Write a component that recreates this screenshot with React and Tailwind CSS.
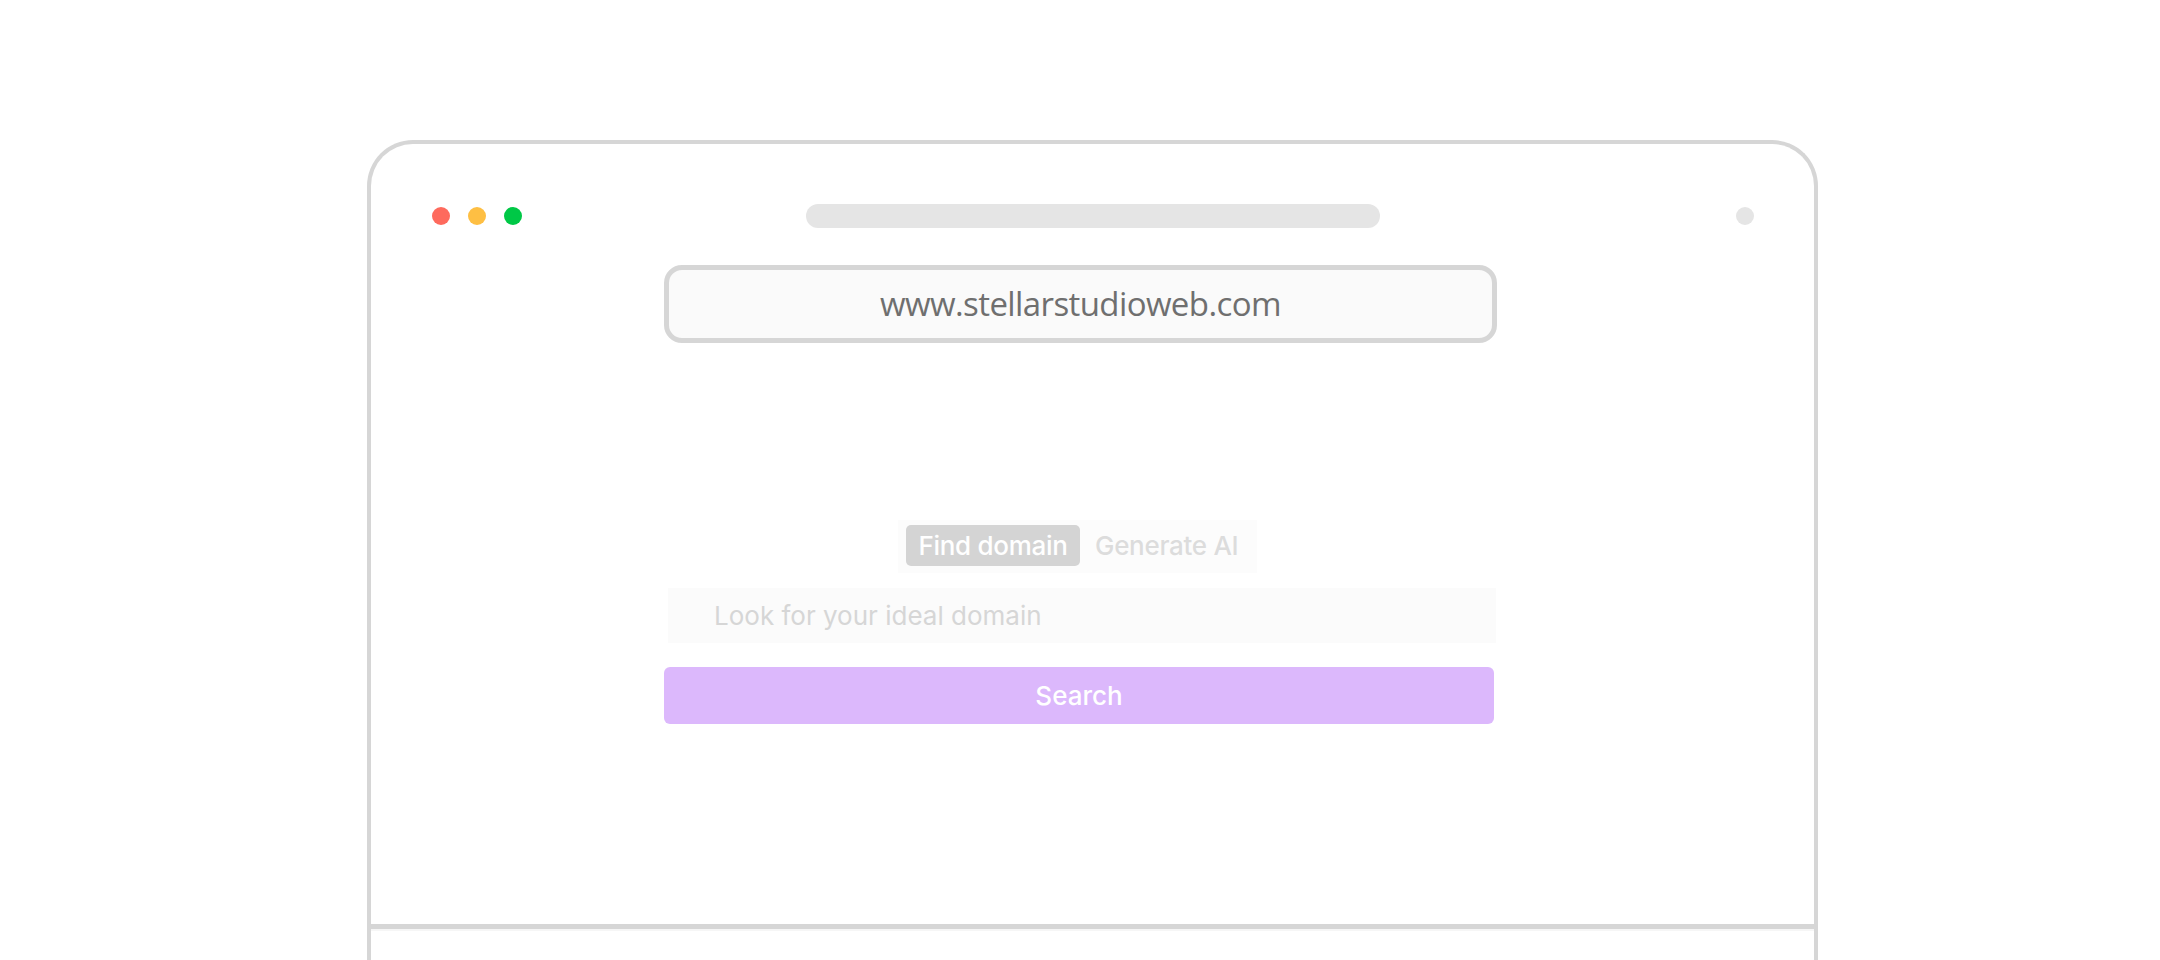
import React from "react";

export default function App() {
  const dots = ["bg-[#fe6a5d]", "bg-[#febf43]", "bg-[#00c846]"];

  return (
    <div className="w-[2160px] h-[960px] overflow-hidden bg-white pt-[140px] pl-[367px]">
      {/* LAPTOP FRAME */}
      <div className="w-[1451px] h-[900px] border-4 border-b-0 border-[#d6d6d6] rounded-t-[46px] flex flex-col">
        {/* SCREEN */}
        <div className="h-[780px] flex flex-col">
          {/* TOP BAR */}
          <div className="flex items-center h-[24px] mt-[60px]">
            <div className="flex gap-[18px] ml-[61px]">
              {dots.map((c, i) => (
                <span key={i} className={`w-[18px] h-[18px] rounded-full ${c}`} />
              ))}
            </div>
            <div className="ml-[284px] w-[574px] h-[24px] rounded-full bg-[#e5e5e5]" />
            <div className="ml-[356px] w-[18px] h-[18px] rounded-full bg-[#e5e5e5]" />
          </div>

          {/* CONTENT */}
          <div className="ml-[293px] w-[833px] flex flex-col">
            {/* URL */}
            <div className="mt-[37px] h-[78px] rounded-[18px] border-[5px] border-[#d6d6d6] bg-[#fafafa] flex items-center justify-center">
              <span className="font-['Open_Sans',sans-serif] text-[33px] tracking-[-0.6px] text-[#6f6f6f]">
                www.stellarstudioweb.com
              </span>
            </div>

            {/* TABS */}
            <div className="mt-[177px] ml-[234px] w-[359px] h-[53px] bg-[#fcfcfc] flex items-start pt-[5px] pl-[8px] font-['Inter',sans-serif]">
              <div className="w-[174px] h-[41px] rounded-[5px] bg-[#d4d4d4] flex items-center justify-center text-white text-[26px] font-medium tracking-[-0.3px]">
                Find domain
              </div>
              <div className="h-[41px] flex items-center pl-[15px] text-[26px] font-medium tracking-[-0.3px] text-[#dcdcdc]">
                Generate AI
              </div>
            </div>

            {/* INPUT */}
            <div className="mt-[15px] ml-[4px] w-[828px] h-[55px] bg-[#fbfbfb] flex items-center pl-[46px] font-['Inter',sans-serif] text-[26px] text-[#d6d6d6]">
              Look for your ideal domain
            </div>

            {/* SEARCH */}
            <button className="mt-[24px] w-[830px] h-[57px] rounded-[6px] bg-[#dcb8fc] flex items-center justify-center font-['Inter',sans-serif] text-[26px] font-medium text-white">
              Search
            </button>
          </div>
        </div>

        {/* HINGE */}
        <div className="h-[5px] bg-[#d6d6d6]" />
        <div className="h-[2px] bg-[#f6f6f6]" />
      </div>
    </div>
  );
}
